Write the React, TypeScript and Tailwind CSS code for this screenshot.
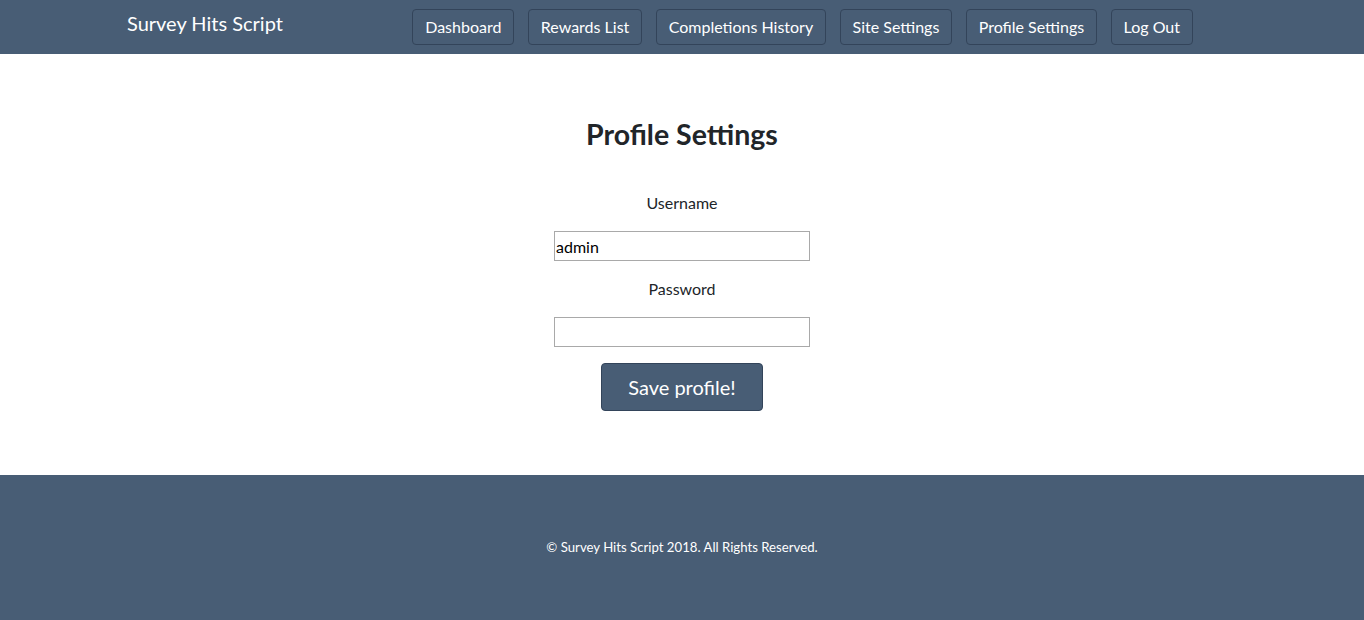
import React from "react";

const navItems = ["Dashboard", "Rewards List", "Completions History", "Site Settings", "Profile Settings", "Log Out"];

export default function App() {
  return (
    <div className="min-h-screen flex flex-col bg-white text-[#212529] [font-family:Lato,'Open_Sans',sans-serif]">
      <header className="h-[54px] bg-[#485d75]">
        <div className="flex h-full items-start pl-[127px] pr-[171px]">
          <div className="pt-[10px] text-[20px] leading-[26px] text-white">Survey Hits Script</div>
          <nav className="ml-auto flex gap-[13.4px] pt-[9px]">
            {navItems.map((n) => (
              <button
                key={n}
                className="h-[36px] rounded-[4px] border border-[#33445a] bg-[#485d75] px-[12px] text-[16px] leading-none text-white"
              >
                {n}
              </button>
            ))}
          </nav>
        </div>
      </header>
      <main className="h-[421px] flex flex-col items-center">
        <h1 className="mt-[65px] text-[28.5px] font-bold leading-[30px]">Profile Settings</h1>
        <label className="mt-[44px] text-[16px] leading-[20px]">Username</label>
        <input
          defaultValue="admin"
          className="mt-[18px] h-[30px] w-[256px] border border-[#a9a9a9] px-[1px] text-[16px] text-black outline-none"
        />
        <label className="mt-[18px] text-[16px] leading-[20px]">Password</label>
        <input
          type="password"
          className="mt-[18px] h-[30px] w-[256px] border border-[#a9a9a9] px-[1px] text-[16px] outline-none"
        />
        <button className="mt-[16px] h-[48px] w-[162px] rounded-[4px] border border-[#33445a] bg-[#485d75] text-[20px] text-white">
          Save profile!
        </button>
      </main>
      <footer className="h-[145px] bg-[#485d75] flex items-center justify-center">
        <p className="text-[13.2px] text-white">© Survey Hits Script 2018. All Rights Reserved.</p>
      </footer>
    </div>
  );
}
